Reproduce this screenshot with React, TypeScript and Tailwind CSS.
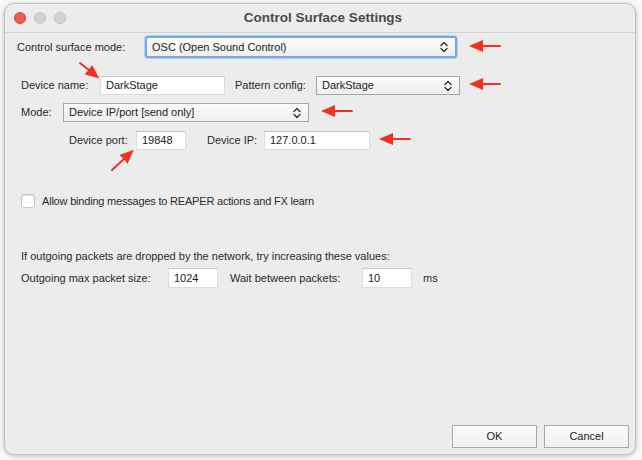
const FONT = { fontFamily: '"Liberation Sans", Arial, sans-serif' }

function Chevrons() {
	return (
		<svg width="8" height="12" viewBox="0 0 8 12" className="shrink-0">
			<path d="M1 4.5 L4 1.5 L7 4.5" fill="none" stroke="#333" strokeWidth="1.4" strokeLinecap="round" strokeLinejoin="round" />
			<path d="M1 7.5 L4 10.5 L7 7.5" fill="none" stroke="#333" strokeWidth="1.4" strokeLinecap="round" strokeLinejoin="round" />
		</svg>
	)
}

function Select({ value, className, focused = false }: { value: string; className: string; focused?: boolean }) {
	return (
		<div
			className={`${className} flex items-center justify-between pl-[5px] pr-[7px] bg-gradient-to-b from-[#fbfbfb] to-[#efefef] ${
				focused
					? "border-[2px] border-[#79a6e4] rounded-[3px] shadow-[0_0_0_1px_#b7cff0]"
					: "border border-[#a6a6a6]"
			}`}
		>
			<span className="text-[11px] text-[#222] truncate">{value}</span>
			<Chevrons />
		</div>
	)
}

function Input({ value, className }: { value: string; className: string }) {
	return (
		<div className={`${className} flex items-center bg-white border border-[#dcdcdc] border-t-[#c8c8c8] pl-[5px]`}>
			<span className="text-[11px] text-[#222]">{value}</span>
		</div>
	)
}

function Button({ label }: { label: string }) {
	return (
		<div className="w-[85px] h-[23px] flex items-center justify-center bg-gradient-to-b from-[#fbfbfb] to-[#f1f1f1] border border-[#a9a9a9] text-[11px] text-[#222]">
			{label}
		</div>
	)
}

export default function App() {
	return (
		<div className="relative w-[642px] h-[460px] bg-[#f7f7f7] overflow-hidden text-[#2a2a2a]" style={FONT}>
			<div className="ml-[4px] mt-[3px] w-[632px] h-[452px] rounded-[10px] bg-[#ececec] border border-[#c4c4c4] shadow-[0_1px_4px_rgba(0,0,0,0.25)] flex flex-col overflow-hidden">
				{/* title bar */}
				<div className="relative h-[29px] shrink-0 border-b border-[#d2d2d2] flex items-center">
					<div className="flex items-center gap-[8px] pl-[9px]">
						<span className="w-[12px] h-[12px] rounded-full bg-[#ee5b55] border border-[#d9443e]" />
						<span className="w-[12px] h-[12px] rounded-full bg-[#d3d3d3] border border-[#c2c2c2]" />
						<span className="w-[12px] h-[12px] rounded-full bg-[#d3d3d3] border border-[#c2c2c2]" />
					</div>
					<div className="absolute inset-0 flex items-center justify-center pl-[6px] text-[13.5px] font-bold text-[#4a4a4a]">
						Control Surface Settings
					</div>
				</div>

				<div className="flex-1 flex flex-col pl-[12px] text-[11px]">
					{/* control surface mode */}
					<div className="flex items-center mt-[3px] h-[22px]">
						<span className="w-[128px]">Control surface mode:</span>
						<Select value="OSC (Open Sound Control)" className="w-[312px] h-[22px]" focused />
					</div>

					{/* device name / pattern config */}
					<div className="flex items-center mt-[18px] pl-[4px] h-[19px]">
						<span className="w-[79px]">Device name:</span>
						<Input value="DarkStage" className="w-[125px] h-[19px]" />
						<span className="ml-[10px] w-[81px]">Pattern config:</span>
						<Select value="DarkStage" className="w-[144px] h-[19px]" />
					</div>

					{/* mode */}
					<div className="flex items-center mt-[8px] pl-[4px] h-[19px]">
						<span className="w-[42px]">Mode:</span>
						<Select value="Device IP/port [send only]" className="w-[246px] h-[19px]" />
					</div>

					{/* port / ip */}
					<div className="flex items-center mt-[9px] pl-[52px] h-[19px]">
						<span className="w-[67px]">Device port:</span>
						<Input value="19848" className="w-[50px] h-[19px]" />
						<span className="ml-[21px] w-[57px]">Device IP:</span>
						<Input value="127.0.0.1" className="w-[106px] h-[19px]" />
					</div>

					{/* checkbox */}
					<div className="flex items-center mt-[44px] pl-[4px] h-[14px]">
						<span className="w-[14px] h-[14px] rounded-[3px] bg-white border border-[#c6c6c6] shadow-[inset_0_1px_0_#e2e2e2]" />
						<span className="ml-[7px] tracking-[-0.2px]">Allow binding messages to REAPER actions and FX learn</span>
					</div>

					<div className="mt-[41px] pl-[4px] leading-[14px]">
						If outgoing packets are dropped by the network, try increasing these values:
					</div>

					<div className="flex items-center mt-[5px] pl-[4px] h-[20px]">
						<span className="w-[147px]">Outgoing max packet size:</span>
						<Input value="1024" className="w-[50px] h-[20px]" />
						<span className="ml-[12px] w-[132px]">Wait between packets:</span>
						<Input value="10" className="w-[50px] h-[20px]" />
						<span className="ml-[11px]">ms</span>
					</div>

					<div className="mt-auto mb-[6px] mr-[6px] flex justify-end gap-[7px]">
						<Button label="OK" />
						<Button label="Cancel" />
					</div>
				</div>
			</div>

			{/* annotation arrows */}
			<svg className="absolute inset-0 pointer-events-none" width="642" height="460" viewBox="0 0 642 460">
				<defs>
					<marker id="head" markerWidth="7" markerHeight="6" refX="1" refY="3" orient="auto" markerUnits="strokeWidth">
						<path d="M0 0 L7 3 L0 6 Z" fill="#ec3323" />
					</marker>
				</defs>
				<g stroke="#ec3323" strokeWidth="2" strokeLinecap="round">
					<line x1="500" y1="46" x2="481" y2="46" markerEnd="url(#head)" />
					<line x1="500" y1="84" x2="481" y2="84" markerEnd="url(#head)" />
					<line x1="352" y1="111" x2="333" y2="111" markerEnd="url(#head)" />
					<line x1="410" y1="139" x2="391" y2="139" markerEnd="url(#head)" />
					<line x1="80" y1="63" x2="90" y2="71" markerEnd="url(#head)" />
					<line x1="112" y1="170" x2="125" y2="158" markerEnd="url(#head)" />
				</g>
			</svg>
		</div>
	)
}
